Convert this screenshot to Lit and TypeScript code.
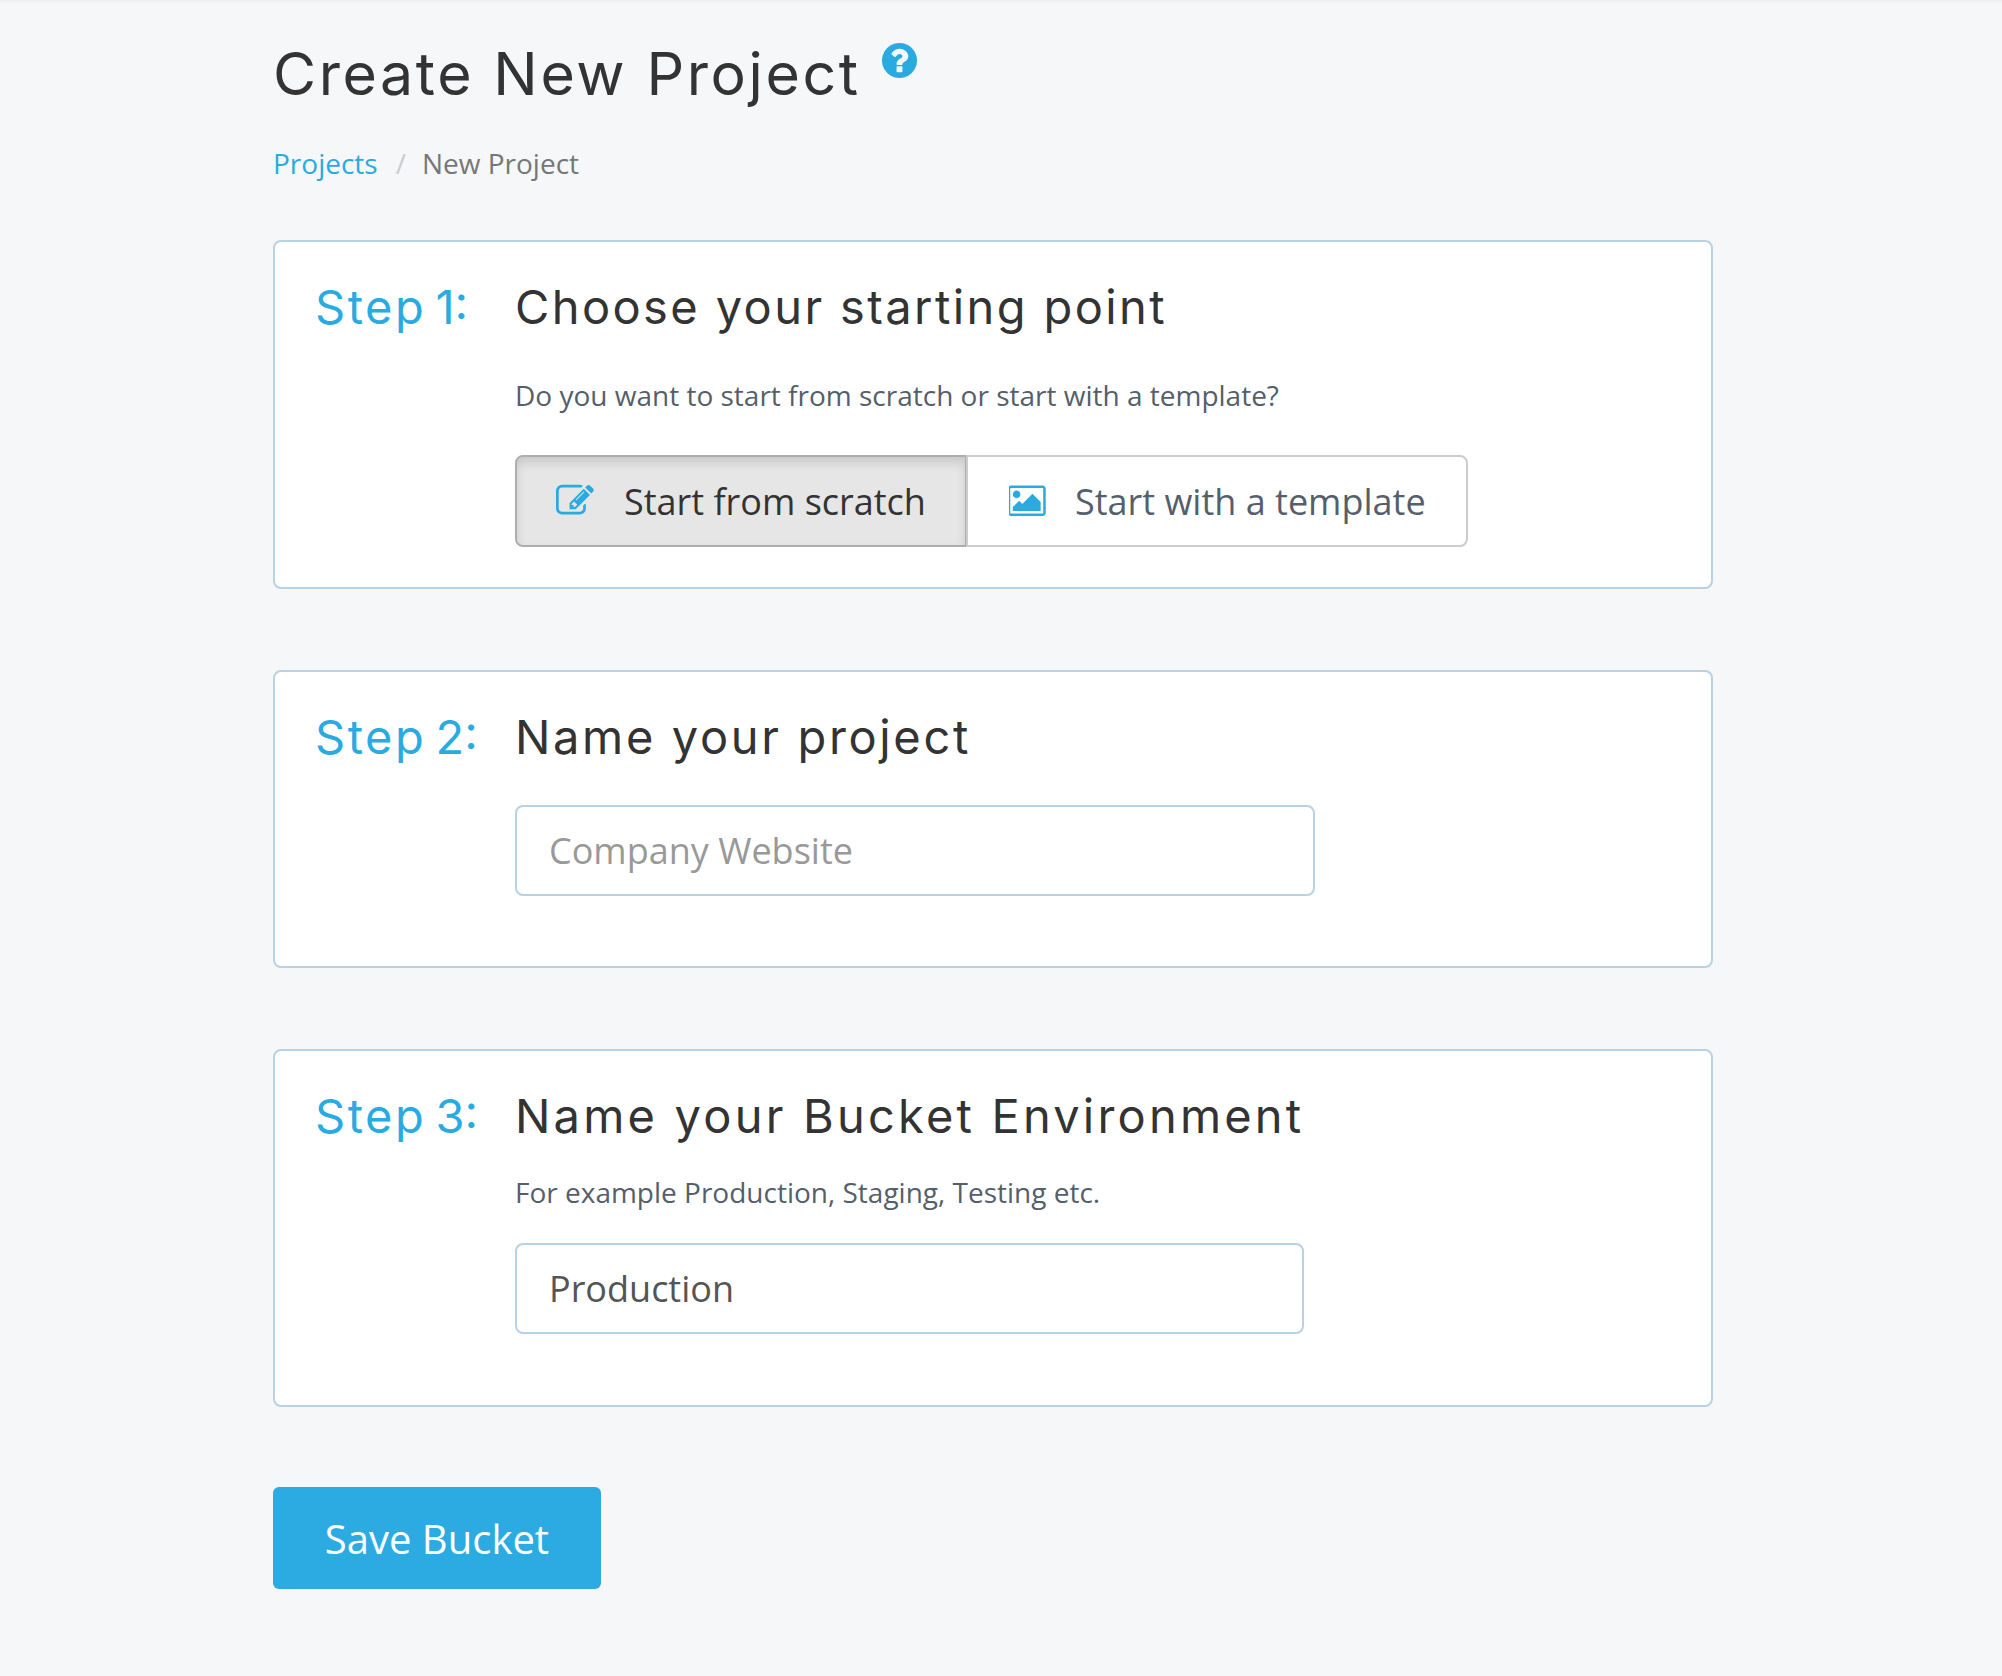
import { LitElement, html, css } from "lit";
import { customElement } from "lit/decorators.js";

@customElement("app-root")
export class AppRoot extends LitElement {
  static styles = css`
    :host {
      display: block;
      min-height: 1676px;
      background: #f5f7f9;
      font-family: "Open Sans", sans-serif;
      color: #555f6b;
    }
    .page {
      box-sizing: border-box;
      min-height: 1676px;
      border-top: 2px solid #eff0f2;
      padding-left: 273px;
    }
    .head {
      display: flex;
      align-items: flex-start;
      height: 141px;
      padding-top: 32px;
      box-sizing: border-box;
      margin: 0;
    }
    h1 {
      margin: 0;
      font: 400 59px/80px Inter, sans-serif;
      color: #333;
      letter-spacing: 2.6px;
    }
    .help {
      width: 41px;
      height: 41px;
      fill: #29abe2;
      margin: 6px 0 0 18px;
    }
    .crumbs {
      display: flex;
      height: 40px;
      font-size: 28px;
      line-height: 40px;
      color: #777;
    }
    .crumbs a {
      color: #29abe2;
      text-decoration: none;
    }
    .crumbs .sep {
      color: #ccc;
      margin: 0 16px 0 18px;
    }
    .card {
      box-sizing: border-box;
      width: 1440px;
      background: #fff;
      border: 2px solid #b7d2e5;
      border-radius: 8px;
      display: grid;
      grid-template-columns: 200px 1fr;
      padding: 31px 40px 0;
    }
    .c1 { margin-top: 57px; height: 349px; }
    .c2 { margin-top: 81px; height: 298px; }
    .c3 { margin-top: 81px; height: 358px; }
    .step, .title {
      font: 400 47px/68px Inter, sans-serif;
    }
    .step { color: #29abe2; word-spacing: -4px; }
    .step span { letter-spacing: 2.5px; }
    .title { color: #333; letter-spacing: 2.65px; }
    .title.t1 { letter-spacing: 2.4px; }
    .title.t3 { letter-spacing: 3.2px; }
    .sub {
      font-size: 28px;
      line-height: 40px;
      color: #555f6b;
    }
    .c1 .sub { margin-top: 34px; }
    .c3 .sub { margin-top: 22px; }
    .group {
      display: inline-flex;
      margin-top: 40px;
    }
    .opt {
      box-sizing: border-box;
      display: flex;
      align-items: center;
      height: 92px;
      border: 2px solid #ccc;
      background: #fff;
      font-size: 36px;
      color: #555f6b;
    }
    .opt svg { fill: #29abe2; display: block; }
    .opt.active {
      width: 452px;
      padding-left: 39px;
      background: #e6e6e6;
      border-color: #adadad;
      color: #333;
      border-radius: 8px 0 0 8px;
      box-shadow: inset 0 6px 10px rgba(0, 0, 0, 0.125);
    }
    .opt.active svg { width: 38px; height: 38px; margin-right: 30px; }
    .opt.rest {
      width: 502px;
      margin-left: -1px;
      padding-left: 41px;
      border-radius: 0 8px 8px 0;
    }
    .opt.rest svg { width: 38px; height: 35.5px; margin-right: 28px; }
    input {
      display: block;
      box-sizing: border-box;
      height: 91px;
      border: 2px solid #b7d2e5;
      border-radius: 8px;
      padding: 0 32px;
      font: 400 36px "Open Sans", sans-serif;
      color: #555;
      background: #fff;
      outline: none;
    }
    input::placeholder { color: #999; opacity: 1; }
    .name { width: 800px; margin-top: 34px; }
    .env { width: 789px; margin-top: 31px; }
    .save {
      display: block;
      box-sizing: border-box;
      margin-top: 80px;
      width: 328px;
      height: 102px;
      border: 0;
      border-radius: 6px;
      background: #2babe2;
      color: #fff;
      font: 400 40px "Open Sans", sans-serif;
      padding: 0;
    }
  `;

  render() {
    return html`
      <div class="page">
        <div class="head">
          <h1>Create New Project</h1>
          <svg class="help" viewBox="0 0 1792 1792"><path d="M1024 1376v-192q0-14-9-23t-23-9h-192q-14 0-23 9t-9 23v192q0 14 9 23t23 9h192q14 0 23-9t9-23zm256-672q0-88-55.5-163t-138.5-116-170-41q-243 0-371 213-15 24 8 42l132 100q7 6 19 6 16 0 25-12 53-68 86-92 34-24 86-24 48 0 85.5 26t37.5 59q0 38-20 61t-68 45q-63 28-115.5 86.5t-52.5 125.5v36q0 14 9 23t23 9h192q14 0 23-9t9-23q0-19 21.5-49.5t54.5-49.5q32-18 49-28.5t46-35 44.5-48 28-60.5 12.5-81zm384 192q0 209-103 385.5t-279.5 279.5-385.5 103-385.5-103-279.5-279.5-103-385.5 103-385.5 279.5-279.5 385.5-103 385.5 103 279.5 279.5 103 385.5z"/></svg>
        </div>
        <nav class="crumbs"><a href="#">Projects</a><span class="sep">/</span><span>New Project</span></nav>

        <section class="card c1">
          <div class="step"><span>Step</span> 1:</div>
          <div>
            <div class="title t1">Choose your starting point</div>
            <div class="sub">Do you want to start from scratch or start with a template?</div>
            <div class="group">
              <div class="opt active">
                <svg viewBox="0 0 1792 1792"><path d="M888 1184l116-116-152-152-116 116v56h96v96h56zm440-720q-16-16-33 1l-350 350q-17 17-1 33t33-1l350-350q17-17 1-33zm80 594v190q0 119-84.5 203.5t-203.5 84.5h-832q-119 0-203.5-84.5t-84.5-203.5v-832q0-119 84.5-203.5t203.5-84.5h832q63 0 117 25 15 7 18 23 3 17-9 29l-49 49q-14 14-32 8-23-6-45-6h-832q-66 0-113 47t-47 113v832q0 66 47 113t113 47h832q66 0 113-47t47-113v-126q0-13 9-22l64-64q15-15 35-7t20 29zm-96-738l288 288-672 672h-288v-288zm444 132l-92 92-288-288 92-92q28-28 68-28t68 28l152 152q28 28 28 68t-28 68z"/></svg>
                <span>Start from scratch</span>
              </div>
              <div class="opt rest">
                <svg viewBox="0 0 1920 1792"><path d="M576 576q0 80-56 136t-136 56-136-56-56-136 56-136 136-56 136 56 56 136zm1024 384v448h-1408v-192l320-320 160 160 512-512zm96-704h-1600q-13 0-22.5 9.5t-9.5 22.5v1216q0 13 9.5 22.5t22.5 9.5h1600q13 0 22.5-9.5t9.5-22.5v-1216q0-13-9.5-22.5t-22.5-9.5zm160 32v1216q0 66-47 113t-113 47h-1600q-66 0-113-47t-47-113v-1216q0-66 47-113t113-47h1600q66 0 113 47t47 113z"/></svg>
                <span>Start with a template</span>
              </div>
            </div>
          </div>
        </section>

        <section class="card c2">
          <div class="step"><span>Step</span> 2:</div>
          <div>
            <div class="title">Name your project</div>
            <input class="name" type="text" placeholder="Company Website" />
          </div>
        </section>

        <section class="card c3">
          <div class="step"><span>Step</span> 3:</div>
          <div>
            <div class="title t3">Name your Bucket Environment</div>
            <div class="sub">For example Production, Staging, Testing etc.</div>
            <input class="env" type="text" value="Production" />
          </div>
        </section>

        <button class="save">Save Bucket</button>
      </div>
    `;
  }
}
